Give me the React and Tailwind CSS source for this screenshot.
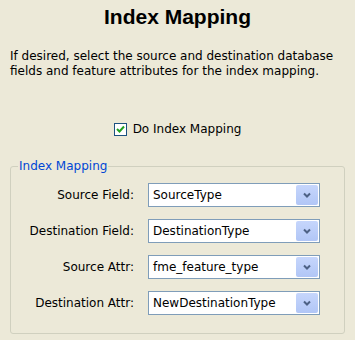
import React from 'react';

const rows = [
    { label: 'Source Field:', value: 'SourceType' },
    { label: 'Destination Field:', value: 'DestinationType' },
    { label: 'Source Attr:', value: 'fme_feature_type' },
    { label: 'Destination Attr:', value: 'NewDestinationType' },
];

const Combo = ({ value }) => (
    <div className="w-[172px] h-[24px] border border-[#7F9DB9] bg-white flex items-center justify-between pl-[4px] pr-[1px]">
        <span>{value}</span>
        <div className="w-[22px] h-[20px] rounded-[2px] bg-gradient-to-b from-[#C6D6FC] to-[#B1C6F6] flex items-center justify-center">
            <svg width="8" height="6" viewBox="0 0 8 6">
                <path d="M1 1.5 L4 4.5 L7 1.5" fill="none" stroke="#4D6185" strokeWidth="2" />
            </svg>
        </div>
    </div>
);

const App = () => {
    return (
        <div className="w-[355px] h-[340px] bg-[#ECE9D8] overflow-hidden text-[12px] text-black font-['DejaVu_Sans',sans-serif]">
            <h1 className="mt-[5px] text-center text-[21px] leading-[24px] font-bold font-['Liberation_Sans',sans-serif]">
                Index Mapping
            </h1>
            <p className="mt-[20px] px-[10px] leading-[15px]">
                If desired, select the source and destination database fields and feature attributes for the index mapping.
            </p>
            <label className="mt-[41px] flex items-center justify-center gap-[6px]">
                <span className="w-[13px] h-[13px] border border-[#1C5180] bg-white flex items-center justify-center">
                    <svg width="9" height="9" viewBox="0 0 9 9">
                        <path d="M1 4 L3.5 6.5 L8 1.5" fill="none" stroke="#21A121" strokeWidth="2" />
                    </svg>
                </span>
                <span>Do Index Mapping</span>
            </label>
            <fieldset className="mt-[19px] mx-[10px] h-[177px] border border-[#D0D0BF] rounded-[3px] px-[7px] pt-[8px]">
                <legend className="px-[1px] text-[#0046D5]">Index Mapping</legend>
                <div className="grid grid-cols-[116px_auto] gap-x-[14px] gap-y-[12px] items-center">
                    {rows.map((row) => (
                        <React.Fragment key={row.label}>
                            <span className="text-right">{row.label}</span>
                            <Combo value={row.value} />
                        </React.Fragment>
                    ))}
                </div>
            </fieldset>
        </div>
    );
};

export default App;
